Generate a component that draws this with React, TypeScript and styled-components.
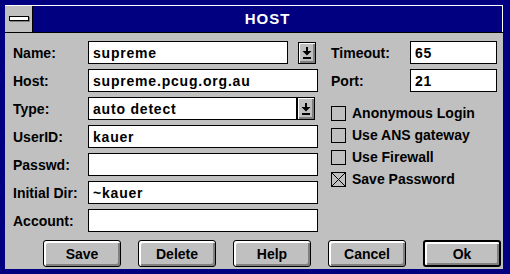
import React from 'react';
import styled, { createGlobalStyle } from 'styled-components';

const GlobalStyle = createGlobalStyle`
  html, body {
    margin: 0;
    padding: 0;
    background: #c0c0c0;
  }
  * {
    box-sizing: border-box;
  }
`;

const Frame = styled.div`
  width: 510px;
  height: 274px;
  background: #000080;
  padding: 5px 7px 5px 5px;
  display: flex;
  flex-direction: column;
  font-family: 'Liberation Sans', Arial, sans-serif;
  font-weight: 700;
  font-size: 14px;
  color: #000;
`;

const TitleRow = styled.div`
  display: flex;
  height: 28px;
  border-bottom: 1px solid #000;
  border-top: 1px solid #fff;
`;

const SysMenu = styled.div`
  width: 28px;
  background: #c0c0c0;
  border-right: 1px solid #000;
  display: flex;
  align-items: center;
  justify-content: center;
`;

const SysBar = styled.div`
  width: 20px;
  height: 5px;
  background: #fff;
  border: 1px solid #000;
  box-shadow: 1px 1px 0 #808080;
  margin-top: -2px;
`;

const Title = styled.div`
  flex: 1;
  background: #000080;
  border-right: 1px solid #fff;
  color: #fff;
  display: flex;
  align-items: center;
  justify-content: center;
  font-size: 15px;
  letter-spacing: 1px;
  padding-bottom: 1px;
`;

const Body = styled.div`
  flex: 1;
  background: #c0c0c0;
  padding: 8px 0 0 8px;
  display: flex;
  flex-direction: column;
`;

const Main = styled.div`
  display: flex;
`;

const FormGrid = styled.div`
  display: grid;
  grid-template-columns: 75px 230px;
  grid-auto-rows: 23px;
  row-gap: 5px;
`;

const Label = styled.div`
  display: flex;
  align-items: center;
  white-space: nowrap;
`;

const FieldRow = styled.div`
  display: flex;
  align-items: center;
`;

const Field = styled.div<{ $w: number }>`
  width: ${p => p.$w}px;
  height: 23px;
  background: #fff;
  border: 1px solid #000;
  display: flex;
  align-items: center;
  padding-left: 4px;
  letter-spacing: 0.8px;
  white-space: nowrap;
`;

const DropButton = styled.div<{ $attached?: boolean }>`
  width: 18px;
  height: ${p => (p.$attached ? 23 : 22)}px;
  margin-left: ${p => (p.$attached ? 0 : 10)}px;
  background: #c0c0c0;
  border: 1px solid #000;
  box-shadow: inset 1px 1px 0 #fff, inset -2px -2px 0 #808080;
  display: flex;
  align-items: center;
  justify-content: center;
`;

const Side = styled.div`
  margin-left: 13px;
  display: flex;
  flex-direction: column;
`;

const SideGrid = styled.div`
  display: grid;
  grid-template-columns: 79px 87px;
  grid-auto-rows: 23px;
  row-gap: 5px;
`;

const Checks = styled.div`
  margin-top: 10px;
  display: flex;
  flex-direction: column;
`;

const CheckRow = styled.div`
  height: 22px;
  display: flex;
  align-items: center;
  gap: 6px;
  white-space: nowrap;
`;

const Box = styled.div`
  width: 15px;
  height: 15px;
  border: 1px solid #000;
  background: #c0c0c0;
  position: relative;
`;

const ButtonRow = styled.div`
  display: flex;
  gap: 17px;
  margin-top: 8px;
  padding-left: 30px;
`;

const Button = styled.div<{ $default?: boolean }>`
  width: 78px;
  height: 27px;
  background: #c0c0c0;
  border: ${p => (p.$default ? 2 : 1)}px solid #000;
  border-radius: 3px;
  box-shadow: inset 2px 2px 0 #fff, inset -2px -2px 0 #808080;
  display: flex;
  align-items: center;
  justify-content: center;
`;

const Arrow = () => (
  <svg width="10" height="12" viewBox="0 0 10 12">
    <rect x="4" y="0" width="2" height="4" fill="#000" />
    <path d="M0.5 4 H9.5 L5 8.5 Z" fill="#000" />
    <rect x="1" y="10" width="8" height="2" fill="#000" />
  </svg>
);

const Cross = () => (
  <svg width="13" height="13" viewBox="0 0 13 13" style={{ position: 'absolute', left: 0, top: 0 }}>
    <path d="M0 0 L13 13 M13 0 L0 13" stroke="#000" strokeWidth="1" />
  </svg>
);

const checks = [
  { label: 'Anonymous Login', on: false },
  { label: 'Use ANS gateway', on: false },
  { label: 'Use Firewall', on: false },
  { label: 'Save Password', on: true },
];

export default function App() {
  return (
    <>
      <GlobalStyle />
      <Frame>
        <TitleRow>
          <SysMenu>
            <SysBar />
          </SysMenu>
          <Title>HOST</Title>
        </TitleRow>
        <Body>
          <Main>
            <FormGrid>
              <Label>Name:</Label>
              <FieldRow>
                <Field $w={200}>supreme</Field>
                <DropButton>
                  <Arrow />
                </DropButton>
              </FieldRow>
              <Label>Host:</Label>
              <Field $w={230}>supreme.pcug.org.au</Field>
              <Label>Type:</Label>
              <FieldRow>
                <Field $w={209}>auto detect</Field>
                <DropButton $attached>
                  <Arrow />
                </DropButton>
              </FieldRow>
              <Label>UserID:</Label>
              <Field $w={230}>kauer</Field>
              <Label>Passwd:</Label>
              <Field $w={230} />
              <Label>Initial Dir:</Label>
              <Field $w={230}>~kauer</Field>
              <Label>Account:</Label>
              <Field $w={230} />
            </FormGrid>
            <Side>
              <SideGrid>
                <Label>Timeout:</Label>
                <Field $w={87}>65</Field>
                <Label>Port:</Label>
                <Field $w={87}>21</Field>
              </SideGrid>
              <Checks>
                {checks.map(c => (
                  <CheckRow key={c.label}>
                    <Box>{c.on && <Cross />}</Box>
                    {c.label}
                  </CheckRow>
                ))}
              </Checks>
            </Side>
          </Main>
          <ButtonRow>
            <Button>Save</Button>
            <Button>Delete</Button>
            <Button>Help</Button>
            <Button>Cancel</Button>
            <Button $default>Ok</Button>
          </ButtonRow>
        </Body>
      </Frame>
    </>
  );
}
